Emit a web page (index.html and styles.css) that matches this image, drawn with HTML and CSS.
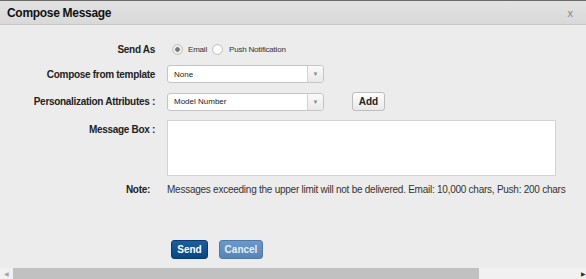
FILE: index.html
```html
<!DOCTYPE html>
<html lang="en">
<head>
    <meta charset="UTF-8">
    <meta name="viewport" content="width=device-width, initial-scale=1.0">
    <title>Compose Message</title>
    <link rel="stylesheet" href="styles.css">
</head>
<body>

    <div class="dialog">
        <div class="dialog-header">
            <h1>Compose Message</h1>
            <span class="close">x</span>
        </div>

        <div class="compose-form">
            <div class="row row-send">
                <label class="field-label">Send As</label>
                <div class="radio-group">
                    <input type="radio" id="email" name="sendas" checked>
                    <label for="email">Email</label>
                    <input type="radio" id="push" name="sendas">
                    <label for="push">Push Notification</label>
                </div>
            </div>

            <div class="row row-template">
                <label class="field-label">Compose from template</label>
                <div class="select-box">
                    <span class="select-text">None</span>
                    <span class="select-arrow">&#9660;</span>
                </div>
            </div>

            <div class="row row-attr">
                <label class="field-label">Personalization Attributes :</label>
                <div class="select-box">
                    <span class="select-text">Model Number</span>
                    <span class="select-arrow">&#9660;</span>
                </div>
                <button type="button" class="btn-add">Add</button>
            </div>

            <div class="row row-message">
                <label class="field-label">Message Box :</label>
                <textarea class="message-box"></textarea>
            </div>

            <div class="row row-note">
                <label class="field-label note-label">Note:</label>
                <span class="note-text">Messages exceeding the upper limit will not be delivered. Email: 10,000 chars, Push: 200 chars</span>
            </div>

            <div class="row row-actions">
                <span class="field-label"></span>
                <button type="button" class="btn btn-send">Send</button>
                <button type="button" class="btn btn-cancel">Cancel</button>
            </div>
        </div>

        <div class="hscroll">
            <span class="scroll-arrow left">&#9664;</span>
            <span class="scroll-thumb"></span>
            <span class="scroll-arrow right">&#9654;</span>
        </div>
    </div>

</body>
</html>
```

FILE: styles.css
```css
body {
    font-family: "Liberation Sans", Arial, sans-serif;
    background-color: #ececec;
    margin: 0;
    width: 586px;
    height: 279px;
    overflow: hidden;
}

.dialog {
    display: flex;
    flex-direction: column;
    height: 279px;
}

.dialog-header {
    height: 25px;
    border-top: 1px solid #6a6a6a;
    border-bottom: 1px solid #c9c9c9;
    background: linear-gradient(#e2e2e2, #d9d9d9);
    display: flex;
    align-items: center;
    justify-content: space-between;
    padding: 0 13px 0 7px;
    box-sizing: border-box;
}

.dialog-header h1 {
    font-size: 12px;
    letter-spacing: -0.3px;
    margin: 0;
    color: #111;
}

.close {
    font-size: 11px;
    color: #888;
}

.compose-form {
    display: flex;
    flex-direction: column;
}

.row {
    display: flex;
    align-items: center;
}

.field-label {
    width: 155px;
    text-align: right;
    font-size: 10px;
    font-weight: bold;
    letter-spacing: -0.3px;
    color: #222;
    margin-right: 12px;
    flex-shrink: 0;
}

.row-send {
    margin-top: 15px;
    height: 18px;
}

.radio-group {
    display: flex;
    align-items: center;
    font-size: 8px;
    letter-spacing: -0.2px;
    color: #333;
}

.radio-group input {
    appearance: none;
    width: 11px;
    height: 11px;
    border: 1px solid #c4c4c4;
    border-radius: 50%;
    background: radial-gradient(circle, #fff 40%, #e8e8e8);
    margin: 0 5px 0 5px;
    box-sizing: border-box;
}

.radio-group input:checked {
    background: radial-gradient(circle, #777 0, #777 2px, #eee 2.5px, #e4e4e4);
}

.radio-group label + input {
    margin-left: 5px;
    margin-right: 6px;
}

.row-template {
    margin-top: 7px;
}

.select-box {
    width: 157px;
    height: 18px;
    background-color: #fff;
    border: 1px solid #c5c5c5;
    border-radius: 3px;
    box-sizing: border-box;
    display: flex;
    align-items: center;
}

.select-text {
    flex: 1;
    font-size: 8px;
    color: #222;
    padding-left: 6px;
}

.select-arrow {
    width: 15px;
    height: 100%;
    border-left: 1px solid #d2d2d2;
    background: linear-gradient(#fafafa, #e9e9e9);
    border-radius: 0 3px 3px 0;
    font-size: 6px;
    color: #888;
    display: flex;
    align-items: center;
    justify-content: center;
}

.row-attr {
    margin-top: 9px;
}

.btn-add {
    margin-left: 28px;
    width: 33px;
    height: 19px;
    font-family: inherit;
    font-size: 10px;
    font-weight: bold;
    color: #222;
    background: linear-gradient(#fdfdfd, #e9e9e9);
    border: 1px solid #bdbdbd;
    border-radius: 3px;
    padding: 0;
}

.row-message {
    margin-top: 9px;
    align-items: flex-start;
}

.row-message .field-label {
    margin-top: 4px;
}

.message-box {
    width: 389px;
    height: 56px;
    margin: 0;
    border: 1px solid #d3d3d3;
    background-color: #fff;
    box-sizing: border-box;
    resize: none;
}

.row-note {
    margin-top: 6px;
    height: 14px;
}

.note-label {
    width: 150px;
    margin-right: 17px;
}

.note-text {
    font-size: 10px;
    letter-spacing: -0.25px;
    color: #333;
    white-space: nowrap;
}

.row-actions {
    margin-top: 44px;
}

.btn {
    height: 19px;
    font-family: inherit;
    font-size: 10px;
    font-weight: bold;
    color: #fff;
    border-radius: 3px;
    padding: 0;
}

.btn-send {
    margin-left: 4px;
    width: 37px;
    background: linear-gradient(#1d5e9e, #0a4684);
    border: 1px solid #0a3b70;
}

.btn-cancel {
    margin-left: 11px;
    width: 44px;
    background: linear-gradient(#6b9aca, #5684b6);
    border: 1px solid #5079a8;
    color: #e6eef7;
}

.hscroll {
    margin-top: auto;
    height: 11px;
    background-color: #f1f1f1;
    display: flex;
    align-items: center;
}

.scroll-arrow {
    font-size: 6px;
    color: #a3a3a3;
    width: 13px;
    text-align: center;
}

.scroll-arrow.right {
    color: #333;
    margin-left: auto;
    width: 6px;
}

.scroll-thumb {
    width: 466px;
    height: 100%;
    background-color: #c1c1c1;
}
```
